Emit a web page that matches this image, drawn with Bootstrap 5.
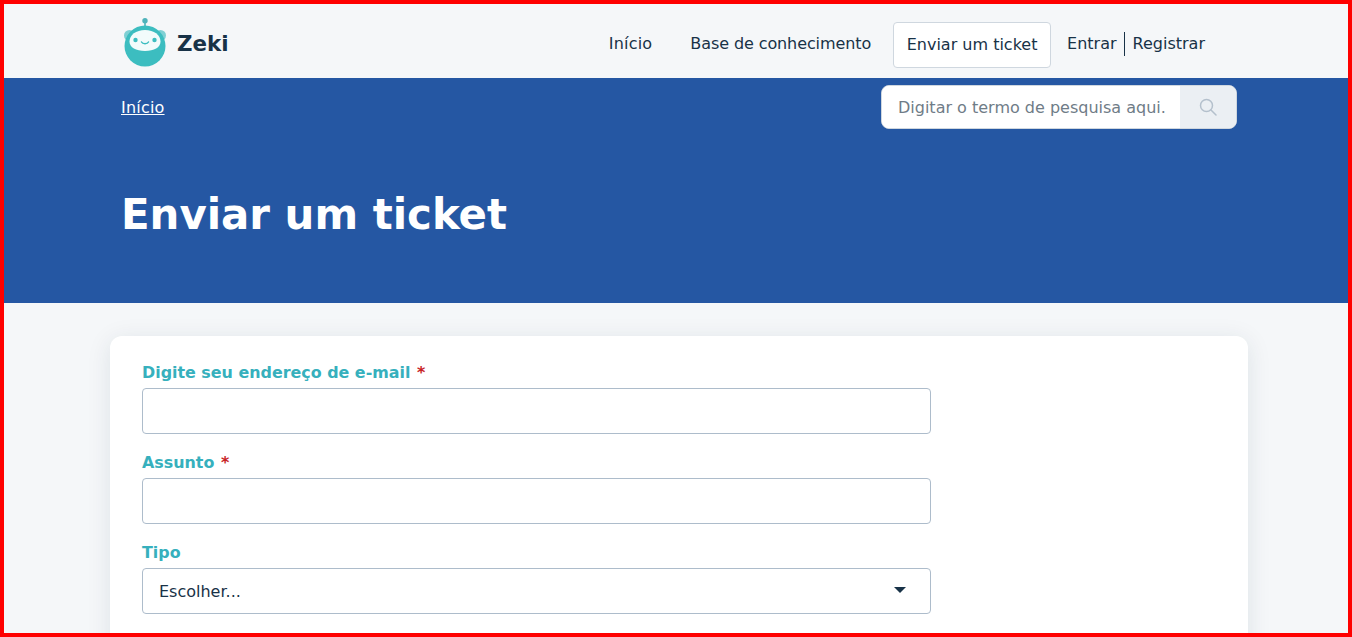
<!DOCTYPE html>
<html lang="pt">

<head>
  <meta charset="utf-8">
  <meta name="viewport" content="width=device-width, initial-scale=1">
  <title>Enviar um ticket</title>
  <link href="https://cdn.jsdelivr.net/npm/bootstrap@5.3.0/dist/css/bootstrap.min.css" rel="stylesheet">
  <style>
    html, body { height: 100%; overflow: hidden; }
    body { font-family: "DejaVu Sans", sans-serif; background: #f5f7f9; color: #183247; font-size: 16px; }
    .frame { height: 637px; border: 4px solid #f00; overflow: hidden; background: #f5f7f9; }
    .topbar { height: 74px; padding: 8px 143px 0 118px; }
    .brand-name { font-size: 21.4px; font-weight: 700; color: #183247; margin: 0 0 2px 9px; text-decoration: none; }
    .top-link { color: #183247; text-decoration: none; font-size: 16px; margin-bottom: 2px; }
    .top-current { height: 46px; width: 158px; margin: 0 16px 0 22px; background: #fff; border: 1px solid #cfd7df; border-radius: 4px; }
    .home-link { margin: 0 38px 2px 0; letter-spacing: .2px; }
    .base-link { letter-spacing: -.1px; }
    .sep { border-left: 1px solid #183247; height: 24px; margin: 0 8px 2px 7px; }
    .hero { height: 225px; background: #2557a3; padding: 7px 111px 0 117px; }
    .crumb { color: #fff; text-decoration: underline; font-size: 16px; margin-top: 11px; letter-spacing: .2px; }
    .search-box { width: 356px; height: 44px; border: 1px solid #cfd7df; border-radius: 8px; overflow: hidden; background: #fff; }
    .search-box input { border: 0; outline: 0; flex: 1; min-width: 0; padding: 2px 14px 0 16px; font-size: 16px; color: #183247; background: #fff; }
    .search-box input::placeholder { color: #6f7c87; opacity: 1; }
    .search-btn { width: 56px; background: #ebeff3; }
    .hero-title { font-size: 41.9px; font-weight: 700; color: #fff; margin: 61px 0 0; line-height: 1.2; }
    .form-card { margin: 33px 100px 0 106px; padding: 20px 32px 40px; background: #fff; border-radius: 12px; box-shadow: 0 4px 24px rgba(24, 50, 71, .1); }
    .form-col { width: 789px; }
    .field-label { display: block; color: #36b0bd; font-weight: 700; font-size: 15.9px; line-height: 32px; margin: 0; padding-top: 1px; height: 32px; }
    .req { color: #c82124; margin-left: 1px; }
    .field-input { height: 46px; border: 1px solid #adbccb; border-radius: 4px; background: #fff; margin-bottom: 12px; }
    .field-input.form-control, .field-input.form-select { font-size: 16px; color: #183247; padding: 2px 40px 0 16px; box-shadow: none; }
    .field-select { background-image: none; }
    .select-wrap { position: relative; }
    .caret { position: absolute; right: 25px; top: 19px; width: 0; height: 0; border-left: 6px solid transparent; border-right: 6px solid transparent; border-top: 6px solid #183247; }
  </style>
</head>

<body>
  <div class="frame">
    <header class="topbar d-flex align-items-center justify-content-between">
      <a class="d-flex align-items-center text-decoration-none" href="#">
        <svg width="46" height="54" viewBox="0 0 46 54" class="logo-mark">
          <circle cx="23" cy="2.800" r="2.700" fill="#4fb3bb"/>
          <rect x="22.200" y="4.500" width="1.600" height="5" fill="#4fb3bb"/>
          <circle cx="7.500" cy="17.500" r="5.500" fill="#7fd0d4"/>
          <circle cx="38.500" cy="17.500" r="5.500" fill="#7fd0d4"/>
          <circle cx="23" cy="28" r="20.500" fill="#3cbdc0"/>
          <path d="M23 12C14 12 7.500 17 7.500 23.500 7.500 29.500 14 33 23 33s15.500-3.500 15.500-9.500C38.500 17 32 12 23 12z" fill="#f2fbfb"/>
          <circle cx="13.500" cy="22" r="2.200" fill="#3cbdc0"/>
          <circle cx="32.500" cy="22" r="2.200" fill="#3cbdc0"/>
          <path d="M19.500 24c1.200 2.200 5.800 2.200 7 0" fill="none" stroke="#3cbdc0" stroke-width="1.500" stroke-linecap="round"/>
        </svg>
        <span class="brand-name">Zeki</span>
      </a>
      <nav class="d-flex align-items-center">
        <a class="top-link home-link" href="#">Início</a>
        <a class="top-link base-link" href="#">Base de conhecimento</a>
        <a class="top-link top-current d-flex align-items-center justify-content-center" href="#">Enviar um ticket</a>
        <a class="top-link" href="#">Entrar</a>
        <span class="sep"></span>
        <a class="top-link" href="#">Registrar</a>
      </nav>
    </header>

    <section class="hero">
      <div class="d-flex justify-content-between align-items-start">
        <a class="crumb" href="#">Início</a>
        <div class="search-box d-flex">
          <input type="text" placeholder="Digitar o termo de pesquisa aqui...">
          <div class="search-btn d-flex align-items-center justify-content-center">
            <svg width="18" height="18" viewBox="0 0 18 18" fill="none" stroke="#b4c0cc" stroke-width="1.500">
              <circle cx="7.500" cy="7.500" r="6"/>
              <path d="M12 12l5 5" stroke-linecap="round"/>
            </svg>
          </div>
        </div>
      </div>
      <h1 class="hero-title">Enviar um ticket</h1>
    </section>

    <main class="form-card">
      <form class="form-col">
        <label class="field-label" for="email">Digite seu endereço de e-mail <span class="req">*</span></label>
        <input id="email" class="form-control field-input" type="email">
        <label class="field-label" for="subject">Assunto <span class="req">*</span></label>
        <input id="subject" class="form-control field-input" type="text">
        <label class="field-label" for="kind">Tipo</label>
        <div class="select-wrap">
          <select id="kind" class="form-select field-input field-select">
            <option>Escolher...</option>
          </select>
          <span class="caret"></span>
        </div>
      </form>
    </main>
  </div>

  <script src="https://cdn.jsdelivr.net/npm/bootstrap@5.3.0/dist/js/bootstrap.bundle.min.js"></script>
</body>

</html>
